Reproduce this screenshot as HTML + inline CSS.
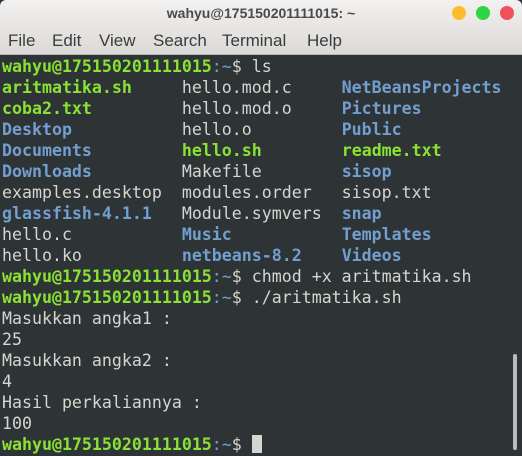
<!DOCTYPE html>
<html><head><style>
body{margin:0;width:522px;height:456px;overflow:hidden;background:#2e3436;font-family:"Liberation Sans",sans-serif}
#hdr{position:absolute;left:0;top:0;width:522px;height:54px;background:linear-gradient(#f2f1f0,#dcdad8);border-bottom:1px solid #b8b6b4;border-radius:6px 6px 0 0}
#title{position:absolute;top:5px;width:522px;text-align:center;font-size:14px;font-weight:bold;color:#4a4a4a}
.c{position:absolute;top:6px;width:14px;height:14px;border-radius:50%}
.m{position:absolute;top:31px;font-size:17px;color:#3c3c3c}
#term{position:absolute;left:2px;top:56px;font-family:"DejaVu Sans Mono","Liberation Mono",monospace;font-size:16.6px;line-height:21px;color:#d3d7cf;white-space:pre}
.g{color:#8ae234;font-weight:bold}.b{color:#729fcf;font-weight:bold}.t{color:#729fcf}
#cur{display:inline-block;width:10px;height:18px;background:#d3d7cf;vertical-align:-3px}
#sb{position:absolute;left:513px;top:354px;width:4px;height:96px;background:#bbb;border-radius:2px}
</style></head><body>
<div id="hdr"><div id="title">wahyu@175150201111015: ~</div>
<div class="c" style="left:452px;background:#fdbd2f"></div>
<div class="c" style="left:476px;background:#2ed442"></div>
<div class="c" style="left:500px;background:#f0505a"></div>
<span class="m" style="left:8px">File</span><span class="m" style="left:52px">Edit</span><span class="m" style="left:99px">View</span><span class="m" style="left:153px">Search</span><span class="m" style="left:222px">Terminal</span><span class="m" style="left:307px">Help</span></div>
<div id="term"><span class="g">wahyu@175150201111015</span><span class="t">:~</span>$ ls
<span class="g">aritmatika.sh</span>     hello.mod.c     <span class="b">NetBeansProjects</span>
<span class="g">coba2.txt</span>         hello.mod.o     <span class="b">Pictures</span>
<span class="b">Desktop</span>           hello.o         <span class="b">Public</span>
<span class="b">Documents</span>         <span class="g">hello.sh</span>        <span class="g">readme.txt</span>
<span class="b">Downloads</span>         Makefile        <span class="b">sisop</span>
examples.desktop  modules.order   sisop.txt
<span class="b">glassfish-4.1.1</span>   Module.symvers  <span class="b">snap</span>
hello.c           <span class="b">Music</span>           <span class="b">Templates</span>
hello.ko          <span class="b">netbeans-8.2</span>    <span class="b">Videos</span>
<span class="g">wahyu@175150201111015</span><span class="t">:~</span>$ chmod +x aritmatika.sh
<span class="g">wahyu@175150201111015</span><span class="t">:~</span>$ ./aritmatika.sh
Masukkan angka1 :
25
Masukkan angka2 :
4
Hasil perkaliannya :
100
<span class="g">wahyu@175150201111015</span><span class="t">:~</span>$ <span id="cur"></span></div>
<div id="sb"></div>
</body></html>
